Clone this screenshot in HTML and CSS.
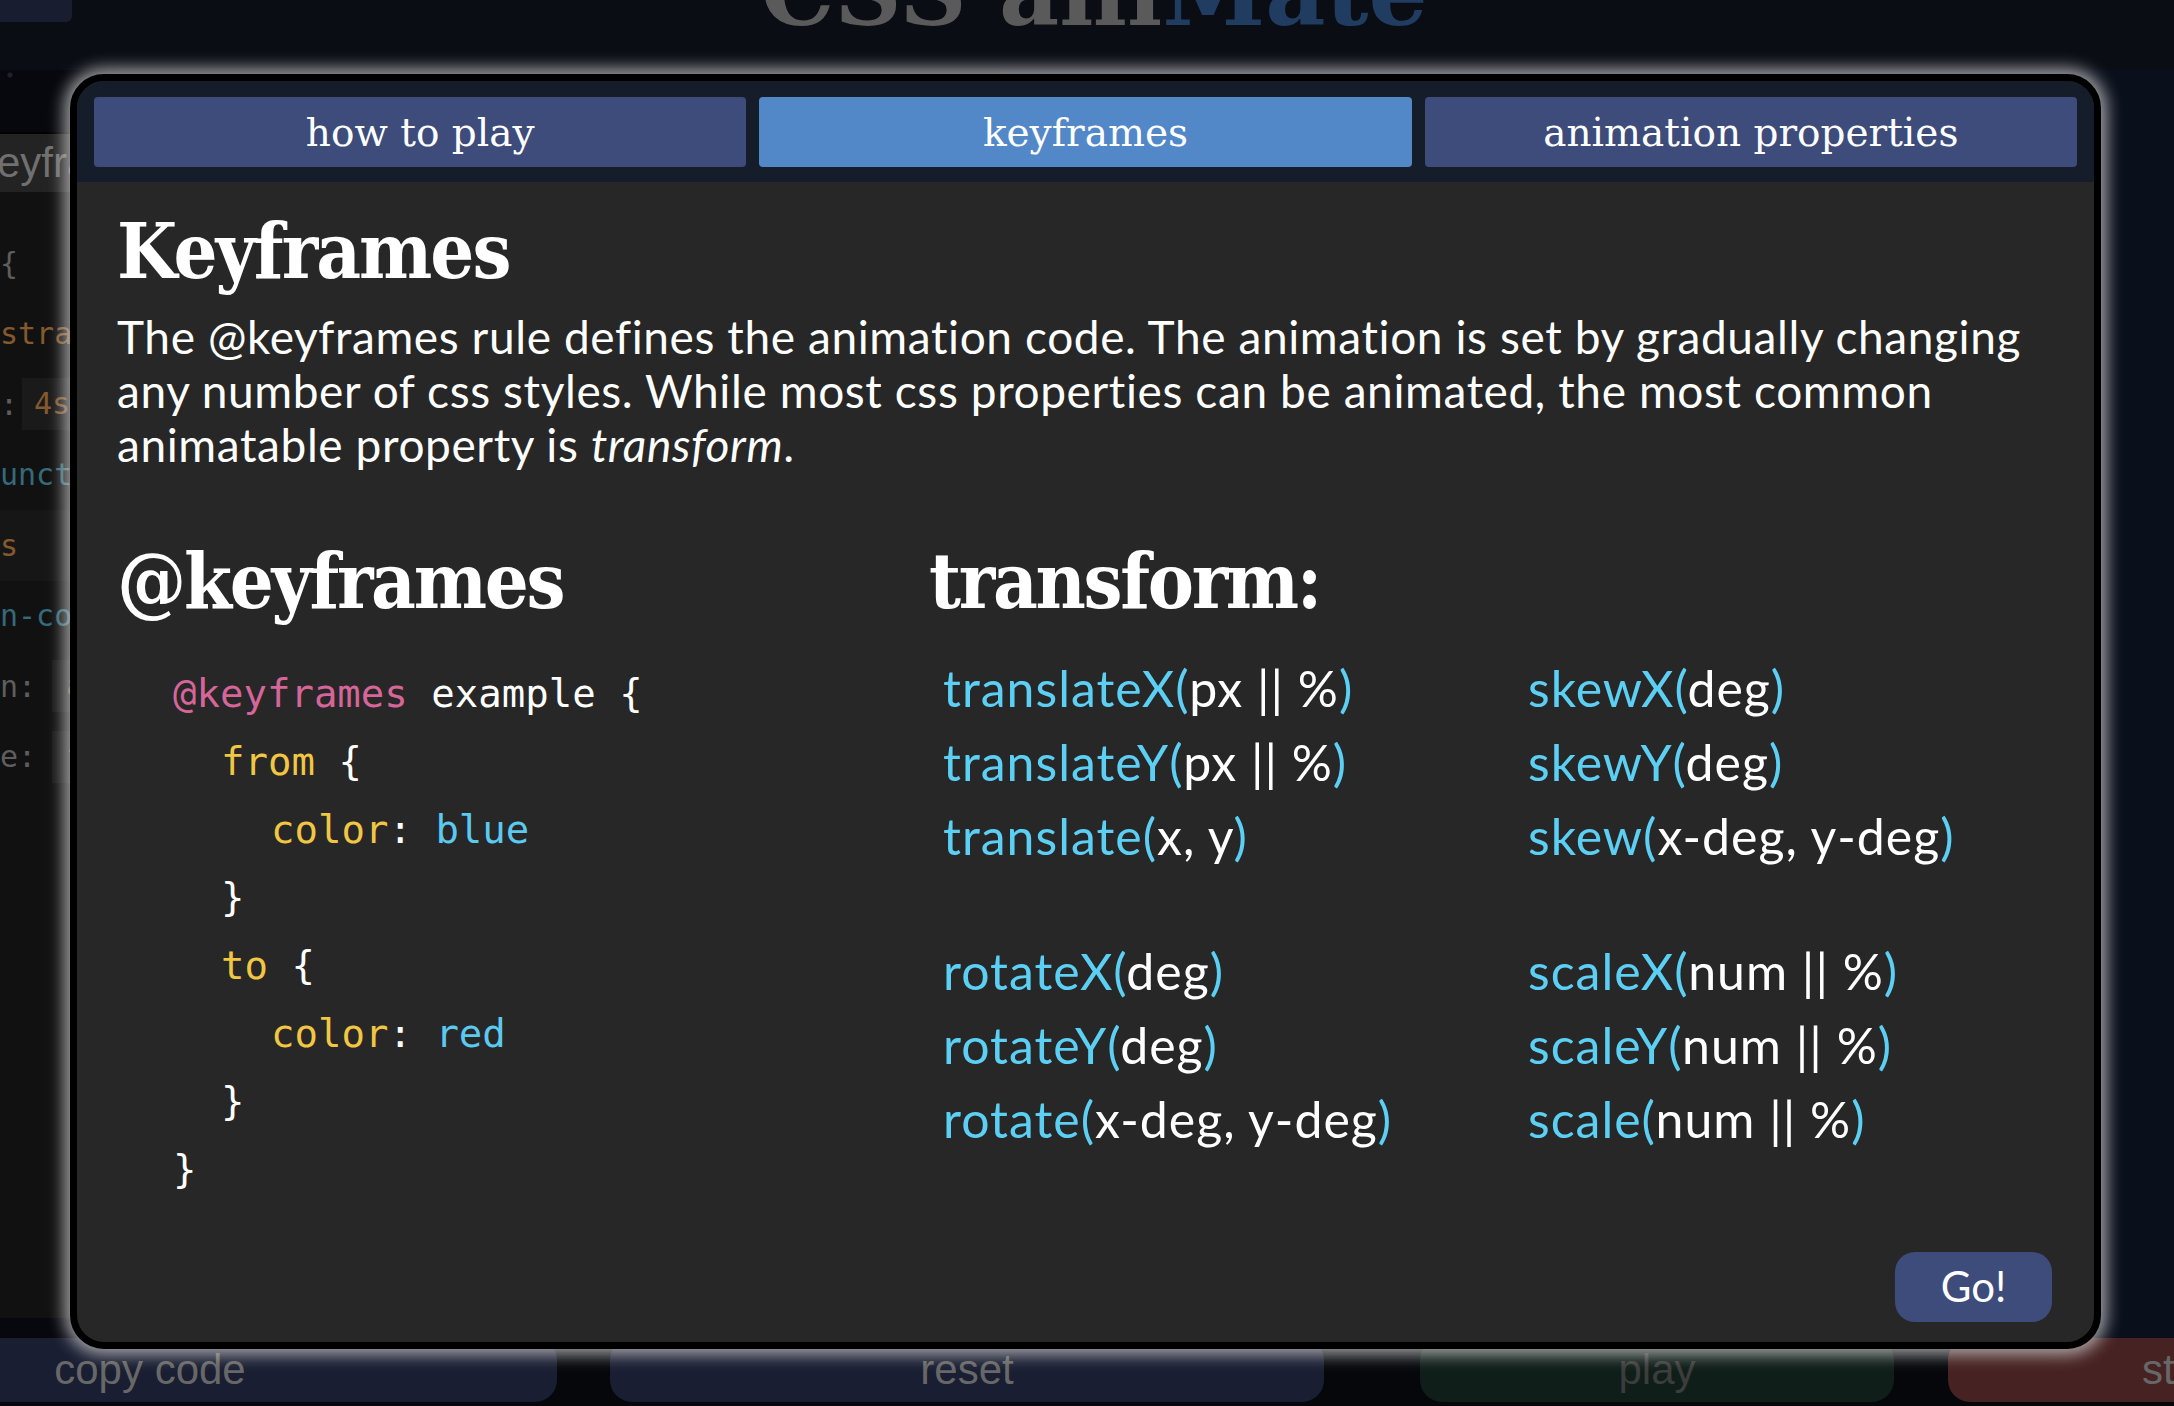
FILE: index.html
```html
<!DOCTYPE html>
<html lang="en">
<head>
<meta charset="utf-8">
<title>CSS aniMate</title>
<link rel="stylesheet" href="styles.css">
</head>
<body>
<header class="page-header">
  <div class="help-btn"></div>
  <h1 class="app-title">CSS ani<span class="mate">Mate</span></h1>
  <div></div>
</header>

<main class="workspace">
  <section class="editor">
    <div class="editor-tab">keyframes</div>
    <div class="editor-code">
      <div class="eline grey">{</div>
      <div class="eline orange">stra</div>
      <div class="eline"><span class="grey">:</span><span class="ebox ebox-tight orange">4s</span></div>
      <div class="eline teal">unct</div>
      <div class="eline hl orange">s</div>
      <div class="eline teal">n-co</div>
      <div class="eline"><span class="grey">n:</span><span class="ebox orange">a</span></div>
      <div class="eline"><span class="grey">e:</span><span class="ebox orange">f</span></div>
    </div>
  </section>
  <section class="preview"></section>
</main>

<footer class="controls">
  <div class="btn btn-copy"><span class="copy-label">copy code</span></div>
  <div class="btn btn-reset">reset</div>
  <div class="btn btn-play">play</div>
  <div class="btn btn-stop">stop</div>
</footer>

<div class="modal">
  <nav class="tabs">
    <div class="tab">how to play</div>
    <div class="tab active">keyframes</div>
    <div class="tab">animation properties</div>
  </nav>
  <div class="content">
    <h2 class="title">Keyframes</h2>
    <p class="intro">The @keyframes rule defines the animation code. The animation is set by gradually changing any number of css styles. While most css properties can be animated, the most common animatable property is <em>transform</em>.</p>
    <div class="cols">
      <section class="col">
        <h3 class="sub">@keyframes</h3>
        <div class="code">
          <div class="ln"><span class="k-pink">@keyframes</span> example {</div>
          <div class="ln i1"><span class="k-yel">from</span> {</div>
          <div class="ln i2"><span class="k-yel">color</span>: <span class="k-blue">blue</span></div>
          <div class="ln i1">}</div>
          <div class="ln i1"><span class="k-yel">to</span> {</div>
          <div class="ln i2"><span class="k-yel">color</span>: <span class="k-blue">red</span></div>
          <div class="ln i1">}</div>
          <div class="ln">}</div>
        </div>
      </section>
      <section class="col">
        <h3 class="sub">transform:</h3>
        <div class="fn-grid">
          <div class="fn-group">
            <div class="fn"><span class="fname">translateX(</span>px || %<span class="fname">)</span></div>
            <div class="fn"><span class="fname">translateY(</span>px || %<span class="fname">)</span></div>
            <div class="fn"><span class="fname">translate(</span>x, y<span class="fname">)</span></div>
          </div>
          <div class="fn-group">
            <div class="fn"><span class="fname">skewX(</span>deg<span class="fname">)</span></div>
            <div class="fn"><span class="fname">skewY(</span>deg<span class="fname">)</span></div>
            <div class="fn"><span class="fname">skew(</span>x-deg, y-deg<span class="fname">)</span></div>
          </div>
          <div class="fn-group">
            <div class="fn"><span class="fname">rotateX(</span>deg<span class="fname">)</span></div>
            <div class="fn"><span class="fname">rotateY(</span>deg<span class="fname">)</span></div>
            <div class="fn"><span class="fname">rotate(</span>x-deg, y-deg<span class="fname">)</span></div>
          </div>
          <div class="fn-group">
            <div class="fn"><span class="fname">scaleX(</span>num || %<span class="fname">)</span></div>
            <div class="fn"><span class="fname">scaleY(</span>num || %<span class="fname">)</span></div>
            <div class="fn"><span class="fname">scale(</span>num || %<span class="fname">)</span></div>
          </div>
        </div>
      </section>
    </div>
    <div class="footer">
      <button class="go">Go!</button>
    </div>
  </div>
</div>
</body>
</html>
```
FILE: styles.css
```css
* { box-sizing: border-box; }

html, body { margin: 0; padding: 0; }

body {
  width: 2174px;
  height: 1406px;
  overflow: hidden;
  position: relative;
  background: #0a0d14;
  font-family: "Lato", "Noto Sans", sans-serif;
}

/* ---------- background page (dimmed) ---------- */
.page-header {
  height: 70px;
  display: grid;
  grid-template-columns: 72px 1fr 72px;
  overflow: hidden;
}

.help-btn {
  height: 22px;
  background: #181d30;
  border-radius: 0 0 6px 0;
}

.app-title {
  margin: -54px 0 0;
  padding-left: 14px;
  text-align: center;
  font: bold 93px/1 "DejaVu Serif", serif;
  color: #5a5a5a;
  white-space: nowrap;
}

.app-title .mate { color: #203c60; }

.workspace {
  height: 1268px;
  display: flex;
  background-color: #06080e;
  background-image:
    radial-gradient(circle at 10px 5px, #1d2230 2px, transparent 3px),
    radial-gradient(circle at 170px 15px, #171b26 2px, transparent 3px);
  background-repeat: no-repeat;
}

.editor {
  width: 1000px;
  margin-top: 62px;
  height: 1186px;
  background: #111111;
  border-top: 2px solid #000;
}

.editor-tab {
  height: 58px;
  background: #232323;
  display: flex;
  align-items: center;
  text-indent: -24px;
  font: 42px "Liberation Sans", sans-serif;
  color: #707070;
}

.editor-code {
  padding-top: 36px;
  font: 30px/71px "DejaVu Sans Mono", monospace;
}

.eline { height: 70.5px; display: flex; align-items: center; white-space: pre; }
.eline.hl { background: #161616; }
.ebox { background: #1a1a1a; margin-left: 16px; padding: 0 6px 0 14px; line-height: 52px; }
.ebox-tight { margin-left: 4px; padding-left: 12px; }
.grey { color: #5e5e5e; }
.orange { color: #85592e; }
.teal { color: #356a7a; }

.preview {
  flex: 1;
  background-color: #0a0f1c;
}

.controls {
  height: 68px;
  display: flex;
  align-items: flex-start;
  background: #05070b;
}

.btn {
  height: 64px;
  border-radius: 22px;
  display: flex;
  align-items: center;
  justify-content: center;
  font: 42px "Liberation Sans", sans-serif;
  color: #676767;
  flex: none;
}

.btn-copy { width: 814px; margin-left: -257px; background: #191e32; }
.btn-reset { width: 714px; margin-left: 53px; background: #191e32; }
.btn-play { width: 474px; margin-left: 96px; background: #0f1e18; color: #3c3c3c; }
.btn-stop { width: 420px; margin-left: 54px; background: #472222; justify-content: flex-start; padding-left: 194px; }

/* ---------- modal ---------- */
.modal {
  position: absolute;
  left: 70px;
  top: 74px;
  width: 2031px;
  height: 1275px;
  border: 7px solid #000;
  border-radius: 34px;
  overflow: hidden;
  display: flex;
  flex-direction: column;
  background: #272727;
  box-shadow: 0 0 16px 6px rgba(205, 205, 205, 0.75);
}

.tabs {
  display: grid;
  grid-template-columns: repeat(3, 1fr);
  gap: 13px;
  padding: 16px 17px 15px;
  background: #151c2a;
}

.tab {
  height: 70px;
  border-radius: 4px;
  background: #3e4c7b;
  color: #fff;
  display: flex;
  align-items: center;
  justify-content: center;
  font: 39px "DejaVu Serif", serif;
}

.tab.active { background: #5288c7; }

.content {
  flex: 1;
  display: flex;
  flex-direction: column;
  padding: 0 42px 20px 40px;
  color: #fff;
}

.title {
  margin: 22px 0 0;
  font: bold 77px/94px "DejaVu Serif", serif;
  font-stretch: condensed;
  letter-spacing: -2px;
}

.intro {
  margin: 12px 0 0;
  font-size: 46px;
  line-height: 54px;
  letter-spacing: 0.6px;
}

.cols {
  margin-top: 62px;
  display: grid;
  grid-template-columns: 812px 1fr;
}

.sub {
  margin: 0;
  font: bold 77px/94px "DejaVu Serif", serif;
  font-stretch: condensed;
  letter-spacing: -2.3px;
}

.code {
  margin-top: 32px;
  padding-left: 56px;
  font: 39px/68px "DejaVu Sans Mono", monospace;
}

.ln { white-space: pre; }
.ln.i1 { padding-left: 48px; }
.ln.i2 { padding-left: 98px; }

.k-pink { color: #d6659a; }
.k-yel { color: #f1c643; }
.k-blue { color: #5bc9f0; }

.fn-grid {
  margin-top: 23px;
  padding-left: 14px;
  display: grid;
  grid-template-columns: 585px 1fr;
  row-gap: 61px;
}

.fn {
  font-size: 50px;
  line-height: 74px;
  letter-spacing: 1px;
  white-space: nowrap;
}

.fname { color: #5ccff5; }

.footer {
  margin-top: auto;
  display: flex;
  justify-content: flex-end;
}

.go {
  width: 157px;
  height: 70px;
  border: 0;
  border-radius: 20px;
  background: #3e4c7b;
  color: #fff;
  font: 42px "Lato", sans-serif;
  padding: 0 0 2px;
}
```
